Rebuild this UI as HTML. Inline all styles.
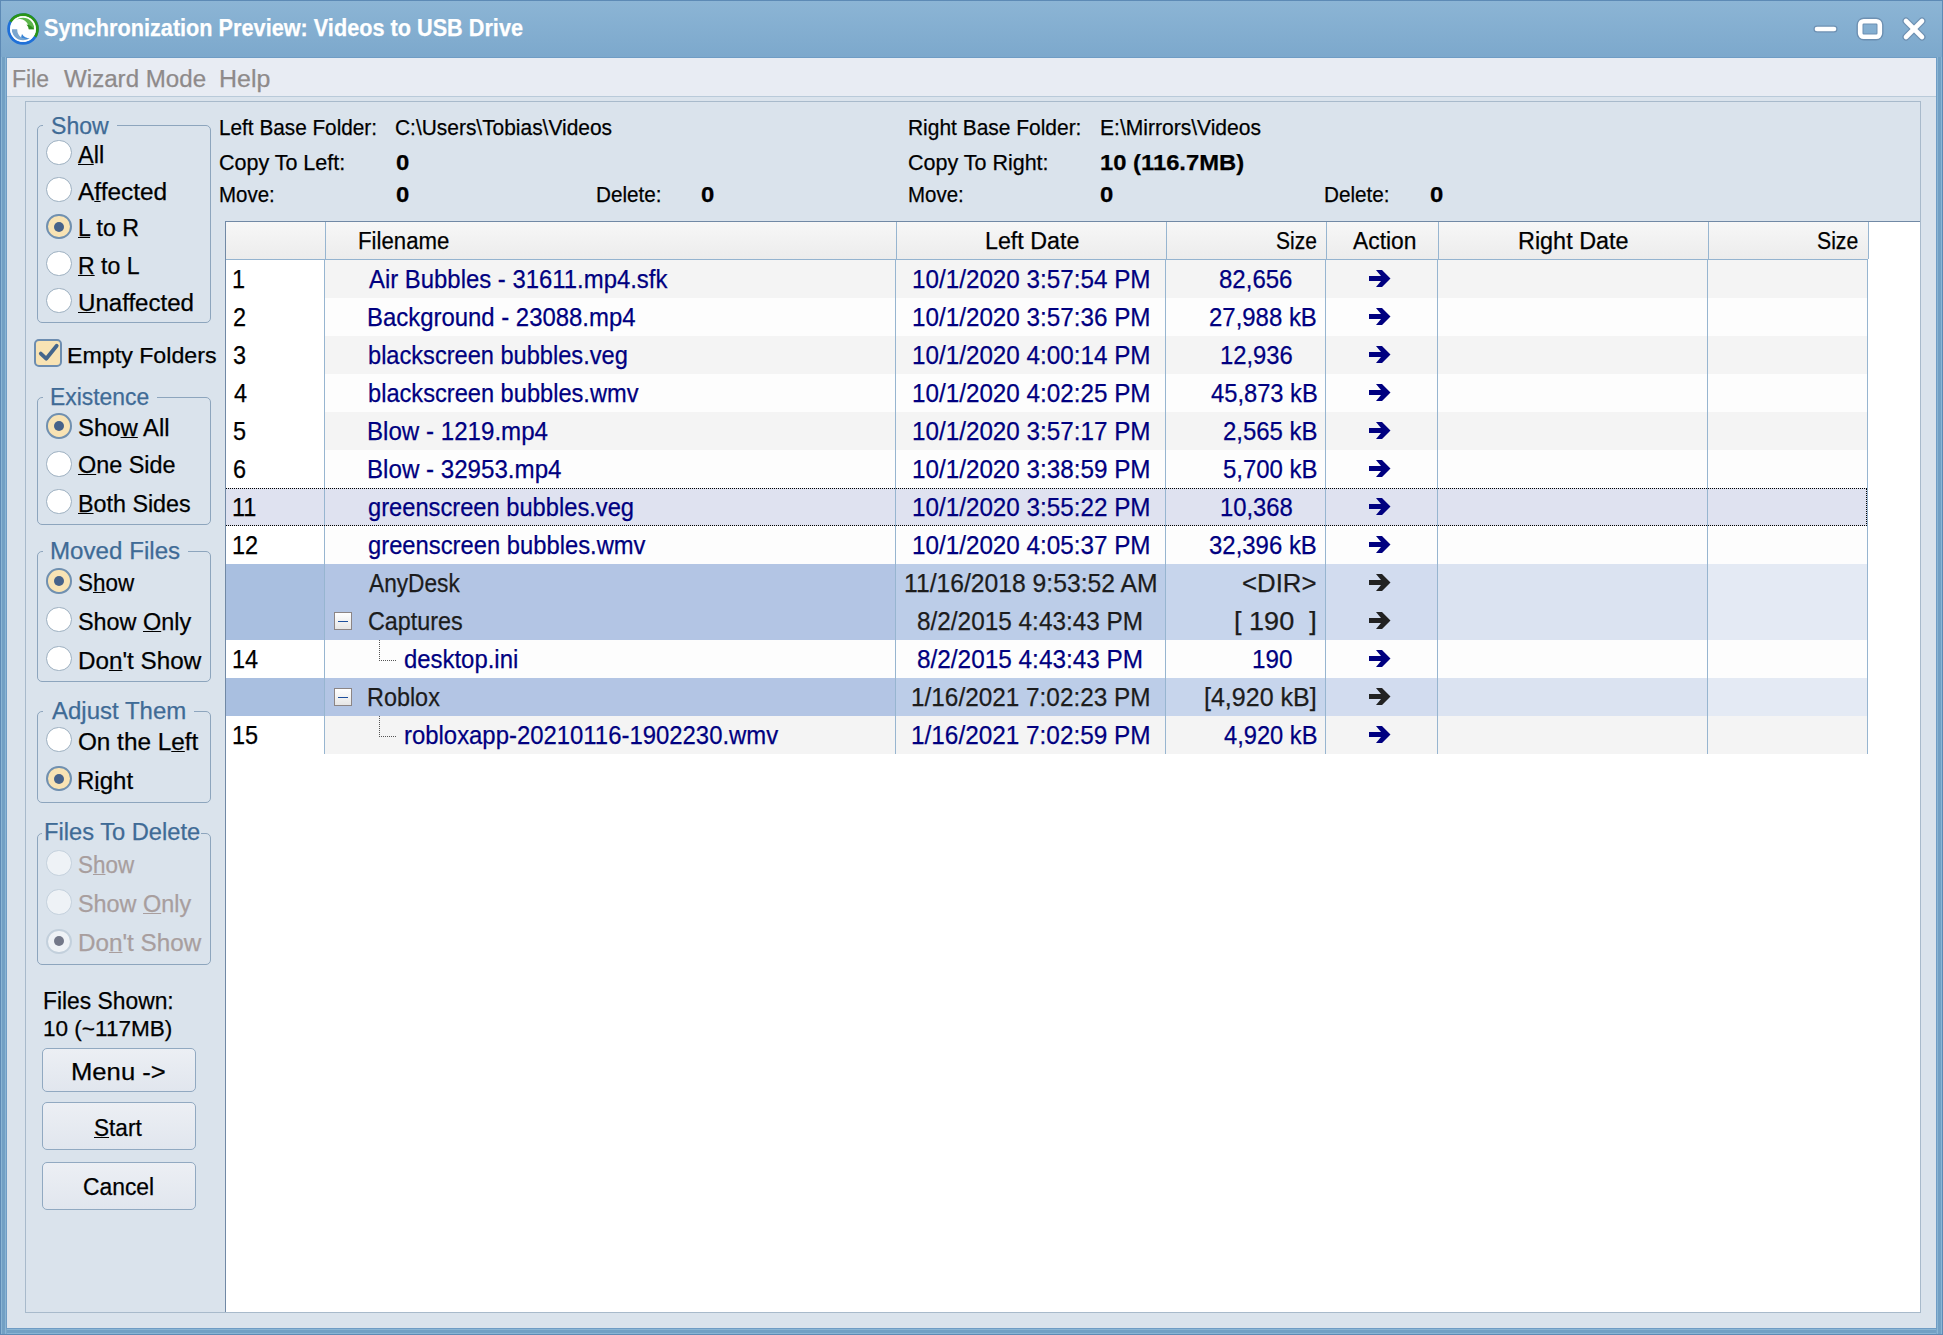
<!DOCTYPE html>
<html><head><meta charset="utf-8"><style>
html,body{margin:0;padding:0;width:1943px;height:1335px;overflow:hidden;background:#79a5ca;}
.t{position:absolute;white-space:pre;font-family:"Liberation Sans",sans-serif;transform-origin:0 0;-webkit-text-stroke:0.25px currentColor;}
.t u{text-decoration-thickness:1px;text-underline-offset:1px;}
</style></head><body>
<div style="position:absolute;left:0px;top:0px;width:1943px;height:1335px;background:#79a5ca;"></div>
<div style="position:absolute;left:0px;top:0px;width:1943px;height:58px;background:linear-gradient(#8cb5d5,#7ca8cc);"></div>
<div style="position:absolute;left:0px;top:0px;width:1943px;height:1px;background:#5d8ab5;"></div>
<div style="position:absolute;left:0px;top:0px;width:1px;height:1335px;background:#5d8ab5;"></div>
<div style="position:absolute;left:1942px;top:0px;width:1px;height:1335px;background:#5d8ab5;"></div>
<div style="position:absolute;left:0px;top:1334px;width:1943px;height:1px;background:#5d8ab5;"></div>
<div style="position:absolute;left:7px;top:1329px;width:1929px;height:1px;background:#8ab5d4;"></div>
<div style="position:absolute;left:7px;top:1333px;width:1929px;height:1px;background:#8ab5d4;"></div>
<div style="position:absolute;left:7px;top:1330px;width:1929px;height:3px;background:#72a0c4;"></div>
<div style="position:absolute;left:1px;top:57px;width:1px;height:1277px;background:#8ab5d4;"></div>
<div style="position:absolute;left:5px;top:57px;width:1px;height:1277px;background:#8ab5d4;"></div>
<div style="position:absolute;left:2px;top:57px;width:3px;height:1277px;background:#72a0c4;"></div>
<div style="position:absolute;left:1937px;top:57px;width:1px;height:1277px;background:#8ab5d4;"></div>
<div style="position:absolute;left:1941px;top:57px;width:1px;height:1277px;background:#8ab5d4;"></div>
<div style="position:absolute;left:1938px;top:57px;width:3px;height:1277px;background:#72a0c4;"></div>
<div style="position:absolute;left:6px;top:57px;width:1931px;height:1272px;background:#dae3ec;"></div>
<div style="position:absolute;left:6px;top:57px;width:1931px;height:1px;background:#6f9cc4;"></div>
<div style="position:absolute;left:6px;top:57px;width:1px;height:1272px;background:#6f9cc4;"></div>
<div style="position:absolute;left:6px;top:1328px;width:1931px;height:1px;background:#6f9cc4;"></div>
<div style="position:absolute;left:1936px;top:57px;width:1px;height:1272px;background:#6f9cc4;"></div>
<div style="position:absolute;left:7px;top:58px;width:1929px;height:38px;background:#e8ecf3;"></div>
<div style="position:absolute;left:7px;top:96px;width:1929px;height:1px;background:#b9cad9;"></div>
<div style="position:absolute;left:25px;top:101px;width:1896px;height:1212px;box-sizing:border-box;border:1px solid #a8bacb;"></div>
<div style="position:absolute;left:225px;top:221px;width:1695px;height:1091px;box-sizing:border-box;background:#fff;border-left:1px solid #7189a5;border-top:1px solid #7189a5;"></div>
<div style="position:absolute;left:37px;top:125px;width:174px;height:198px;box-sizing:border-box;border:1px solid #8da5bd;border-radius:5px;"></div>
<div style="position:absolute;left:43px;top:124px;width:74px;height:3px;background:#dae3ec;"></div>
<div style="position:absolute;left:37px;top:397px;width:174px;height:128px;box-sizing:border-box;border:1px solid #8da5bd;border-radius:5px;"></div>
<div style="position:absolute;left:43px;top:396px;width:114px;height:3px;background:#dae3ec;"></div>
<div style="position:absolute;left:37px;top:551px;width:174px;height:131px;box-sizing:border-box;border:1px solid #8da5bd;border-radius:5px;"></div>
<div style="position:absolute;left:43px;top:550px;width:145.2px;height:3px;background:#dae3ec;"></div>
<div style="position:absolute;left:37px;top:711px;width:174px;height:92px;box-sizing:border-box;border:1px solid #8da5bd;border-radius:5px;"></div>
<div style="position:absolute;left:43px;top:710px;width:151.3px;height:3px;background:#dae3ec;"></div>
<div style="position:absolute;left:37px;top:833px;width:174px;height:132px;box-sizing:border-box;border:1px solid #8da5bd;border-radius:5px;"></div>
<div style="position:absolute;left:42.2px;top:832px;width:158.5px;height:3px;background:#dae3ec;"></div>
<div style="position:absolute;left:46.3px;top:140.0px;width:25.4px;height:25.4px;box-sizing:border-box;border-radius:50%;background:#ffffff;border:1.9px solid #9cafc0;"></div>
<div style="position:absolute;left:46.3px;top:177.10000000000002px;width:25.4px;height:25.4px;box-sizing:border-box;border-radius:50%;background:#ffffff;border:1.9px solid #9cafc0;"></div>
<div style="position:absolute;left:46.3px;top:214.0px;width:25.4px;height:25.4px;box-sizing:border-box;border-radius:50%;background:#f8e3b4;border:2.2px solid #7090b0;"></div>
<div style="position:absolute;left:54.0px;top:221.7px;width:10.0px;height:10.0px;border-radius:50%;background:#46628a;"></div>
<div style="position:absolute;left:46.3px;top:250.90000000000003px;width:25.4px;height:25.4px;box-sizing:border-box;border-radius:50%;background:#ffffff;border:1.9px solid #9cafc0;"></div>
<div style="position:absolute;left:46.3px;top:288.1px;width:25.4px;height:25.4px;box-sizing:border-box;border-radius:50%;background:#ffffff;border:1.9px solid #9cafc0;"></div>
<div style="position:absolute;left:46.3px;top:413.2px;width:25.4px;height:25.4px;box-sizing:border-box;border-radius:50%;background:#f8e3b4;border:2.2px solid #7090b0;"></div>
<div style="position:absolute;left:54.0px;top:420.9px;width:10.0px;height:10.0px;border-radius:50%;background:#46628a;"></div>
<div style="position:absolute;left:46.3px;top:451.2px;width:25.4px;height:25.4px;box-sizing:border-box;border-radius:50%;background:#ffffff;border:1.9px solid #9cafc0;"></div>
<div style="position:absolute;left:46.3px;top:489.0px;width:25.4px;height:25.4px;box-sizing:border-box;border-radius:50%;background:#ffffff;border:1.9px solid #9cafc0;"></div>
<div style="position:absolute;left:46.3px;top:568.1999999999999px;width:25.4px;height:25.4px;box-sizing:border-box;border-radius:50%;background:#f8e3b4;border:2.2px solid #7090b0;"></div>
<div style="position:absolute;left:54.0px;top:575.9px;width:10.0px;height:10.0px;border-radius:50%;background:#46628a;"></div>
<div style="position:absolute;left:46.3px;top:607.0999999999999px;width:25.4px;height:25.4px;box-sizing:border-box;border-radius:50%;background:#ffffff;border:1.9px solid #9cafc0;"></div>
<div style="position:absolute;left:46.3px;top:646.0px;width:25.4px;height:25.4px;box-sizing:border-box;border-radius:50%;background:#ffffff;border:1.9px solid #9cafc0;"></div>
<div style="position:absolute;left:46.3px;top:727.0px;width:25.4px;height:25.4px;box-sizing:border-box;border-radius:50%;background:#ffffff;border:1.9px solid #9cafc0;"></div>
<div style="position:absolute;left:46.3px;top:765.9px;width:25.4px;height:25.4px;box-sizing:border-box;border-radius:50%;background:#f8e3b4;border:2.2px solid #7090b0;"></div>
<div style="position:absolute;left:54.0px;top:773.6px;width:10.0px;height:10.0px;border-radius:50%;background:#46628a;"></div>
<div style="position:absolute;left:46.3px;top:850.1999999999999px;width:25.4px;height:25.4px;box-sizing:border-box;border-radius:50%;background:#eef2f6;border:1.9px solid #c3d0dc;"></div>
<div style="position:absolute;left:46.3px;top:889.3px;width:25.4px;height:25.4px;box-sizing:border-box;border-radius:50%;background:#eef2f6;border:1.9px solid #c3d0dc;"></div>
<div style="position:absolute;left:46.3px;top:928.5px;width:25.4px;height:25.4px;box-sizing:border-box;border-radius:50%;background:#eef2f6;border:2.2px solid #c3d0dc;"></div>
<div style="position:absolute;left:54.0px;top:936.2px;width:10.0px;height:10.0px;border-radius:50%;background:#737889;"></div>
<div style="position:absolute;left:34px;top:339px;width:28px;height:28px;box-sizing:border-box;border-radius:5px;background:#f8e3b4;border:2px solid #6d8db0;"></div>
<svg style="position:absolute;left:34px;top:339px" width="28" height="28"><path d="M6.8 14.6 L12.2 19.7 L22.7 6.8" fill="none" stroke="#44668c" stroke-width="3.8" stroke-linecap="round" stroke-linejoin="round"/></svg>
<div style="position:absolute;left:42.3px;top:1048.1px;width:153.4px;height:43.5px;box-sizing:border-box;border-radius:5px;border:1px solid #91a9c1;background:linear-gradient(#eceff4,#e1e6ee);"></div>
<div style="position:absolute;left:42.3px;top:1102.4px;width:153.4px;height:47.59999999999991px;box-sizing:border-box;border-radius:5px;border:1px solid #91a9c1;background:linear-gradient(#eceff4,#e1e6ee);"></div>
<div style="position:absolute;left:42.3px;top:1162.4px;width:153.4px;height:47.399999999999864px;box-sizing:border-box;border-radius:5px;border:1px solid #91a9c1;background:linear-gradient(#eceff4,#e1e6ee);"></div>
<div style="position:absolute;left:226px;top:222px;width:1642px;height:37px;background:linear-gradient(#f7f7f7,#ececec);"></div>
<div style="position:absolute;left:226px;top:259px;width:1642px;height:1px;background:#94b3cf;"></div>
<div style="position:absolute;left:325px;top:222px;width:1px;height:37px;background:#97b5d0;"></div>
<div style="position:absolute;left:896px;top:222px;width:1px;height:37px;background:#97b5d0;"></div>
<div style="position:absolute;left:1166px;top:222px;width:1px;height:37px;background:#97b5d0;"></div>
<div style="position:absolute;left:1326px;top:222px;width:1px;height:37px;background:#97b5d0;"></div>
<div style="position:absolute;left:1438px;top:222px;width:1px;height:37px;background:#97b5d0;"></div>
<div style="position:absolute;left:1708px;top:222px;width:1px;height:37px;background:#97b5d0;"></div>
<div style="position:absolute;left:1868px;top:222px;width:1px;height:37px;background:#97b5d0;"></div>
<div style="position:absolute;left:226px;top:260px;width:98px;height:38px;background:#ffffff;"></div>
<div style="position:absolute;left:325px;top:260px;width:1542px;height:38px;background:#f4f4f4;"></div>
<div style="position:absolute;left:226px;top:298px;width:98px;height:38px;background:#ffffff;"></div>
<div style="position:absolute;left:325px;top:298px;width:1542px;height:38px;background:#fdfdfd;"></div>
<div style="position:absolute;left:226px;top:336px;width:98px;height:38px;background:#ffffff;"></div>
<div style="position:absolute;left:325px;top:336px;width:1542px;height:38px;background:#f4f4f4;"></div>
<div style="position:absolute;left:226px;top:374px;width:98px;height:38px;background:#ffffff;"></div>
<div style="position:absolute;left:325px;top:374px;width:1542px;height:38px;background:#fdfdfd;"></div>
<div style="position:absolute;left:226px;top:412px;width:98px;height:38px;background:#ffffff;"></div>
<div style="position:absolute;left:325px;top:412px;width:1542px;height:38px;background:#f4f4f4;"></div>
<div style="position:absolute;left:226px;top:450px;width:98px;height:38px;background:#ffffff;"></div>
<div style="position:absolute;left:325px;top:450px;width:1542px;height:38px;background:#fdfdfd;"></div>
<div style="position:absolute;left:226px;top:488px;width:98px;height:38px;background:#dfe2f0;"></div>
<div style="position:absolute;left:325px;top:488px;width:1542px;height:38px;background:#dfe2f0;"></div>
<div style="position:absolute;left:226px;top:526px;width:98px;height:38px;background:#ffffff;"></div>
<div style="position:absolute;left:325px;top:526px;width:1542px;height:38px;background:#fdfdfd;"></div>
<div style="position:absolute;left:226px;top:564px;width:99px;height:38px;background:#a9bfe0;"></div>
<div style="position:absolute;left:325px;top:564px;width:571px;height:38px;background:#b3c5e4;"></div>
<div style="position:absolute;left:896px;top:564px;width:270px;height:38px;background:#bccde8;"></div>
<div style="position:absolute;left:1166px;top:564px;width:160px;height:38px;background:#c7d5ec;"></div>
<div style="position:absolute;left:1326px;top:564px;width:112px;height:38px;background:#d2dcef;"></div>
<div style="position:absolute;left:1438px;top:564px;width:270px;height:38px;background:#dbe3f1;"></div>
<div style="position:absolute;left:1708px;top:564px;width:159px;height:38px;background:#e4eaf4;"></div>
<div style="position:absolute;left:226px;top:602px;width:99px;height:38px;background:#a9bfe0;"></div>
<div style="position:absolute;left:325px;top:602px;width:571px;height:38px;background:#b3c5e4;"></div>
<div style="position:absolute;left:896px;top:602px;width:270px;height:38px;background:#bccde8;"></div>
<div style="position:absolute;left:1166px;top:602px;width:160px;height:38px;background:#c7d5ec;"></div>
<div style="position:absolute;left:1326px;top:602px;width:112px;height:38px;background:#d2dcef;"></div>
<div style="position:absolute;left:1438px;top:602px;width:270px;height:38px;background:#dbe3f1;"></div>
<div style="position:absolute;left:1708px;top:602px;width:159px;height:38px;background:#e4eaf4;"></div>
<div style="position:absolute;left:226px;top:640px;width:98px;height:38px;background:#ffffff;"></div>
<div style="position:absolute;left:325px;top:640px;width:1542px;height:38px;background:#fdfdfd;"></div>
<div style="position:absolute;left:226px;top:678px;width:99px;height:38px;background:#a9bfe0;"></div>
<div style="position:absolute;left:325px;top:678px;width:571px;height:38px;background:#b3c5e4;"></div>
<div style="position:absolute;left:896px;top:678px;width:270px;height:38px;background:#bccde8;"></div>
<div style="position:absolute;left:1166px;top:678px;width:160px;height:38px;background:#c7d5ec;"></div>
<div style="position:absolute;left:1326px;top:678px;width:112px;height:38px;background:#d2dcef;"></div>
<div style="position:absolute;left:1438px;top:678px;width:270px;height:38px;background:#dbe3f1;"></div>
<div style="position:absolute;left:1708px;top:678px;width:159px;height:38px;background:#e4eaf4;"></div>
<div style="position:absolute;left:226px;top:716px;width:98px;height:38px;background:#ffffff;"></div>
<div style="position:absolute;left:325px;top:716px;width:1542px;height:38px;background:#f4f4f4;"></div>
<div style="position:absolute;left:324px;top:260px;width:1px;height:494px;background:#97b5d0;"></div>
<div style="position:absolute;left:895px;top:260px;width:1px;height:494px;background:#97b5d0;"></div>
<div style="position:absolute;left:1165px;top:260px;width:1px;height:494px;background:#97b5d0;"></div>
<div style="position:absolute;left:1325px;top:260px;width:1px;height:494px;background:#97b5d0;"></div>
<div style="position:absolute;left:1437px;top:260px;width:1px;height:494px;background:#97b5d0;"></div>
<div style="position:absolute;left:1707px;top:260px;width:1px;height:494px;background:#97b5d0;"></div>
<div style="position:absolute;left:1867px;top:260px;width:1px;height:494px;background:#97b5d0;"></div>
<div style="position:absolute;left:226px;top:488px;width:1641px;height:38px;box-sizing:border-box;border:1px dotted #000;border-left:none;"></div>
<div style="position:absolute;left:334px;top:612px;width:18px;height:18px;box-sizing:border-box;border:1px solid #8c8585;background:linear-gradient(#fff,#e6e6e6);"></div>
<div style="position:absolute;left:338px;top:620.5px;width:10px;height:1.6px;background:#1d4f9c;"></div>
<div style="position:absolute;left:334px;top:688px;width:18px;height:18px;box-sizing:border-box;border:1px solid #8c8585;background:linear-gradient(#fff,#e6e6e6);"></div>
<div style="position:absolute;left:338px;top:696.5px;width:10px;height:1.6px;background:#1d4f9c;"></div>
<div style="position:absolute;left:379px;top:640px;width:1px;height:21px;border-left:1px dotted #555;"></div>
<div style="position:absolute;left:379px;top:660px;width:17px;height:1px;border-top:1px dotted #555;"></div>
<div style="position:absolute;left:379px;top:716px;width:1px;height:21px;border-left:1px dotted #555;"></div>
<div style="position:absolute;left:379px;top:736px;width:17px;height:1px;border-top:1px dotted #555;"></div>
<svg style="position:absolute;left:1369px;top:270px" width="23" height="18"><polygon points="0,6 12,6 7,0 13,0 21.5,8.5 13,17 7,17 12,11 0,11" fill="#000080"/></svg>
<svg style="position:absolute;left:1369px;top:308px" width="23" height="18"><polygon points="0,6 12,6 7,0 13,0 21.5,8.5 13,17 7,17 12,11 0,11" fill="#000080"/></svg>
<svg style="position:absolute;left:1369px;top:346px" width="23" height="18"><polygon points="0,6 12,6 7,0 13,0 21.5,8.5 13,17 7,17 12,11 0,11" fill="#000080"/></svg>
<svg style="position:absolute;left:1369px;top:384px" width="23" height="18"><polygon points="0,6 12,6 7,0 13,0 21.5,8.5 13,17 7,17 12,11 0,11" fill="#000080"/></svg>
<svg style="position:absolute;left:1369px;top:422px" width="23" height="18"><polygon points="0,6 12,6 7,0 13,0 21.5,8.5 13,17 7,17 12,11 0,11" fill="#000080"/></svg>
<svg style="position:absolute;left:1369px;top:460px" width="23" height="18"><polygon points="0,6 12,6 7,0 13,0 21.5,8.5 13,17 7,17 12,11 0,11" fill="#000080"/></svg>
<svg style="position:absolute;left:1369px;top:498px" width="23" height="18"><polygon points="0,6 12,6 7,0 13,0 21.5,8.5 13,17 7,17 12,11 0,11" fill="#000080"/></svg>
<svg style="position:absolute;left:1369px;top:536px" width="23" height="18"><polygon points="0,6 12,6 7,0 13,0 21.5,8.5 13,17 7,17 12,11 0,11" fill="#000080"/></svg>
<svg style="position:absolute;left:1369px;top:574px" width="23" height="18"><polygon points="0,6 12,6 7,0 13,0 21.5,8.5 13,17 7,17 12,11 0,11" fill="#222"/></svg>
<svg style="position:absolute;left:1369px;top:612px" width="23" height="18"><polygon points="0,6 12,6 7,0 13,0 21.5,8.5 13,17 7,17 12,11 0,11" fill="#222"/></svg>
<svg style="position:absolute;left:1369px;top:650px" width="23" height="18"><polygon points="0,6 12,6 7,0 13,0 21.5,8.5 13,17 7,17 12,11 0,11" fill="#000080"/></svg>
<svg style="position:absolute;left:1369px;top:688px" width="23" height="18"><polygon points="0,6 12,6 7,0 13,0 21.5,8.5 13,17 7,17 12,11 0,11" fill="#222"/></svg>
<svg style="position:absolute;left:1369px;top:726px" width="23" height="18"><polygon points="0,6 12,6 7,0 13,0 21.5,8.5 13,17 7,17 12,11 0,11" fill="#000080"/></svg>
<svg style="position:absolute;left:1805px;top:10px" width="130" height="40">
<g stroke="#5a7799" stroke-width="7" stroke-linecap="round" fill="none" opacity="0.55">
<line x1="12" y1="19" x2="29" y2="19"/>
<rect x="55" y="11" width="20" height="16" rx="4"/>
<line x1="101" y1="11" x2="117" y2="27"/><line x1="117" y1="11" x2="101" y2="27"/>
</g>
<g stroke="#fff" stroke-width="4.6" stroke-linecap="round" fill="none">
<line x1="12" y1="19" x2="29" y2="19"/>
<rect x="55.2" y="11.2" width="19.6" height="15.6" rx="3.5"/>
<line x1="101" y1="11" x2="117" y2="27"/><line x1="117" y1="11" x2="101" y2="27"/>
</g></svg>
<svg style="position:absolute;left:7.07px;top:12.8px" width="32" height="32" viewBox="-16 -16 32 32">
<circle cx="0" cy="0" r="15.8" fill="#1f70d8"/>
<path d="M0 0 L-13.64 -7.97 A15.8 15.8 0 1 1 13.37 8.42 Z" fill="#2a9418"/>
<circle cx="0" cy="0" r="13" fill="#fff"/>
<path d="M-7.5 -9.3 A11.3 11.3 0 0 1 11.2 0.3 L5.8 0.3 A9.5 9.5 0 0 0 -7.5 -9.3Z" fill="#5db64b"/>
<path d="M3.5 -4.5 A11.3 11.3 0 0 1 11.2 0.3 L5.8 0.3 A9.5 9.5 0 0 0 3.5 -4.5Z" fill="#2f8f1f"/>
<path d="M7.5 9.3 A11.3 11.3 0 0 1 -11.2 0.3 L-5.8 0.3 A9.5 9.5 0 0 0 7.5 9.3Z" fill="#7ba6cf"/>
<path d="M-2 8.5 A11.3 11.3 0 0 0 7.5 9.3 A9.5 9.5 0 0 1 -1 5Z" fill="#3b86d6"/>
<circle cx="0" cy="0" r="12" fill="none" stroke="#fff" stroke-width="1.4"/>
</svg>
<div class="t" style="left:44.00px;top:16.57px;font-size:23.19px;line-height:23.19px;color:#fff;font-weight:bold;transform:scaleX(0.9348);">Synchronization Preview: Videos to USB Drive</div>
<div class="t" style="left:11.70px;top:67.14px;font-size:24.64px;line-height:24.64px;color:#8e8a8a;transform:scaleX(0.9302);">File</div>
<div class="t" style="left:63.80px;top:67.14px;font-size:24.64px;line-height:24.64px;color:#8e8a8a;transform:scaleX(0.9796);">Wizard Mode</div>
<div class="t" style="left:218.88px;top:67.14px;font-size:24.64px;line-height:24.64px;color:#8e8a8a;transform:scaleX(1.0137);">Help</div>
<div class="t" style="left:219.48px;top:115.82px;font-size:22.9px;line-height:22.9px;color:#000;transform:scaleX(0.9066);">Left Base Folder:</div>
<div class="t" style="left:395.00px;top:115.82px;font-size:22.9px;line-height:22.9px;color:#000;transform:scaleX(0.9137);">C:\Users\Tobias\Videos</div>
<div class="t" style="left:219.47px;top:151.42px;font-size:22.9px;line-height:22.9px;color:#000;transform:scaleX(0.9382);">Copy To Left:</div>
<div class="t" style="left:395.91px;top:151.66px;font-size:22.61px;line-height:22.61px;color:#000;font-weight:bold;transform:scaleX(1.0568);">0</div>
<div class="t" style="left:219.43px;top:183.32px;font-size:22.9px;line-height:22.9px;color:#000;transform:scaleX(0.8935);">Move:</div>
<div class="t" style="left:395.91px;top:183.56px;font-size:22.61px;line-height:22.61px;color:#000;font-weight:bold;transform:scaleX(1.0568);">0</div>
<div class="t" style="left:596.45px;top:183.32px;font-size:22.9px;line-height:22.9px;color:#000;transform:scaleX(0.9042);">Delete:</div>
<div class="t" style="left:701.30px;top:183.56px;font-size:22.61px;line-height:22.61px;color:#000;font-weight:bold;transform:scaleX(1.0568);">0</div>
<div class="t" style="left:908.08px;top:115.82px;font-size:22.9px;line-height:22.9px;color:#000;transform:scaleX(0.9149);">Right Base Folder:</div>
<div class="t" style="left:1099.99px;top:115.82px;font-size:22.9px;line-height:22.9px;color:#000;transform:scaleX(0.9194);">E:\Mirrors\Videos</div>
<div class="t" style="left:908.07px;top:151.42px;font-size:22.9px;line-height:22.9px;color:#000;transform:scaleX(0.9388);">Copy To Right:</div>
<div class="t" style="left:1099.99px;top:151.66px;font-size:22.61px;line-height:22.61px;color:#000;font-weight:bold;transform:scaleX(1.0521);">10 (116.7MB)</div>
<div class="t" style="left:908.04px;top:183.32px;font-size:22.9px;line-height:22.9px;color:#000;transform:scaleX(0.8935);">Move:</div>
<div class="t" style="left:1099.89px;top:183.56px;font-size:22.61px;line-height:22.61px;color:#000;font-weight:bold;transform:scaleX(1.0568);">0</div>
<div class="t" style="left:1323.97px;top:183.32px;font-size:22.9px;line-height:22.9px;color:#000;transform:scaleX(0.9042);">Delete:</div>
<div class="t" style="left:1429.89px;top:183.56px;font-size:22.61px;line-height:22.61px;color:#000;font-weight:bold;transform:scaleX(1.0568);">0</div>
<div class="t" style="left:50.99px;top:113.56px;font-size:23.91px;line-height:23.91px;color:#3f6b96;transform:scaleX(0.9649);">Show</div>
<div class="t" style="left:50.24px;top:385.71px;font-size:23.62px;line-height:23.62px;color:#3f6b96;transform:scaleX(0.9698);">Existence</div>
<div class="t" style="left:49.96px;top:539.43px;font-size:24.06px;line-height:24.06px;color:#3f6b96;transform:scaleX(1.0039);">Moved Files</div>
<div class="t" style="left:52.10px;top:699.61px;font-size:23.62px;line-height:23.62px;color:#3f6b96;transform:scaleX(1.0167);">Adjust Them</div>
<div class="t" style="left:43.96px;top:821.31px;font-size:23.62px;line-height:23.62px;color:#3f6b96;transform:scaleX(1.0033);">Files To Delete</div>
<div class="t" style="left:77.90px;top:142.99px;font-size:24.35px;line-height:24.35px;color:#000;transform:scaleX(0.9667);"><u>A</u>ll</div>
<div class="t" style="left:77.91px;top:179.69px;font-size:24.35px;line-height:24.35px;color:#000;transform:scaleX(1.0027);">A<u>f</u>fected</div>
<div class="t" style="left:77.91px;top:216.39px;font-size:24.35px;line-height:24.35px;color:#000;transform:scaleX(0.9534);"><u>L</u> to R</div>
<div class="t" style="left:77.91px;top:253.89px;font-size:24.35px;line-height:24.35px;color:#000;transform:scaleX(0.9473);"><u>R</u> to L</div>
<div class="t" style="left:77.95px;top:290.89px;font-size:24.35px;line-height:24.35px;color:#000;transform:scaleX(0.9888);"><u>U</u>naffected</div>
<div class="t" style="left:67.48px;top:343.52px;font-size:22.9px;line-height:22.9px;color:#000;transform:scaleX(1.0134);">Empty Folders</div>
<div class="t" style="left:77.97px;top:416.19px;font-size:24.35px;line-height:24.35px;color:#000;transform:scaleX(0.9816);">Sho<u>w</u> All</div>
<div class="t" style="left:78.47px;top:453.39px;font-size:24.35px;line-height:24.35px;color:#000;transform:scaleX(0.9609);"><u>O</u>ne Side</div>
<div class="t" style="left:77.96px;top:491.69px;font-size:24.35px;line-height:24.35px;color:#000;transform:scaleX(0.9567);"><u>B</u>oth Sides</div>
<div class="t" style="left:77.90px;top:570.79px;font-size:24.35px;line-height:24.35px;color:#000;transform:scaleX(0.9212);">S<u>h</u>ow</div>
<div class="t" style="left:77.90px;top:609.69px;font-size:24.35px;line-height:24.35px;color:#000;transform:scaleX(0.9608);">Show <u>O</u>nly</div>
<div class="t" style="left:77.77px;top:648.89px;font-size:24.35px;line-height:24.35px;color:#000;transform:scaleX(0.9950);">Do<u>n</u>&#x27;t Show</div>
<div class="t" style="left:77.89px;top:729.79px;font-size:24.35px;line-height:24.35px;color:#000;">On the L<u>e</u>ft</div>
<div class="t" style="left:77.32px;top:768.89px;font-size:24.35px;line-height:24.35px;color:#000;transform:scaleX(0.9865);">R<u>i</u>ght</div>
<div class="t" style="left:77.90px;top:852.59px;font-size:24.35px;line-height:24.35px;color:#a89e9e;transform:scaleX(0.9212);">S<u>h</u>ow</div>
<div class="t" style="left:77.90px;top:891.99px;font-size:24.35px;line-height:24.35px;color:#a89e9e;transform:scaleX(0.9608);">Show <u>O</u>nly</div>
<div class="t" style="left:77.77px;top:930.89px;font-size:24.35px;line-height:24.35px;color:#a89e9e;transform:scaleX(0.9950);">Do<u>n</u>&#x27;t Show</div>
<div class="t" style="left:42.95px;top:989.44px;font-size:24.64px;line-height:24.64px;color:#000;transform:scaleX(0.9271);">Files Shown:</div>
<div class="t" style="left:43.35px;top:1017.02px;font-size:22.9px;line-height:22.9px;color:#000;transform:scaleX(0.9849);">10 (~117MB)</div>
<div class="t" style="left:70.72px;top:1059.99px;font-size:24.35px;line-height:24.35px;color:#000;transform:scaleX(1.0534);">Menu -&gt;</div>
<div class="t" style="left:94.38px;top:1115.61px;font-size:24.2px;line-height:24.2px;color:#000;transform:scaleX(0.9339);"><u>S</u>tart</div>
<div class="t" style="left:83.06px;top:1175.09px;font-size:24.35px;line-height:24.35px;color:#000;transform:scaleX(0.9391);">Cancel</div>
<div class="t" style="left:358.18px;top:229.14px;font-size:24.64px;line-height:24.64px;color:#000;transform:scaleX(0.9018);">Filename</div>
<div class="t" style="left:984.94px;top:229.14px;font-size:24.64px;line-height:24.64px;color:#000;transform:scaleX(0.9439);">Left Date</div>
<div class="t" style="left:1275.96px;top:229.14px;font-size:24.64px;line-height:24.64px;color:#000;transform:scaleX(0.8517);">Size</div>
<div class="t" style="left:1352.61px;top:229.14px;font-size:24.64px;line-height:24.64px;color:#000;transform:scaleX(0.9266);">Action</div>
<div class="t" style="left:1517.94px;top:229.14px;font-size:24.64px;line-height:24.64px;color:#000;transform:scaleX(0.9504);">Right Date</div>
<div class="t" style="left:1816.65px;top:229.14px;font-size:24.64px;line-height:24.64px;color:#000;transform:scaleX(0.8615);">Size</div>
<div class="t" style="left:232.00px;top:265.91px;font-size:26.09px;line-height:26.09px;color:#000;transform:scaleX(0.9000);">1</div>
<div class="t" style="left:369.00px;top:265.91px;font-size:26.09px;line-height:26.09px;color:#000080;transform:scaleX(0.9163);">Air Bubbles - 31611.mp4.sfk</div>
<div class="t" style="left:912.07px;top:265.91px;font-size:26.09px;line-height:26.09px;color:#000080;transform:scaleX(0.9293);">10/1/2020 3:57:54 PM</div>
<div class="t" style="left:1219.28px;top:265.91px;font-size:26.09px;line-height:26.09px;color:#000080;transform:scaleX(0.9207);">82,656</div>
<div class="t" style="left:233.00px;top:303.91px;font-size:26.09px;line-height:26.09px;color:#000;transform:scaleX(0.9000);">2</div>
<div class="t" style="left:366.98px;top:303.91px;font-size:26.09px;line-height:26.09px;color:#000080;transform:scaleX(0.9169);">Background - 23088.mp4</div>
<div class="t" style="left:912.07px;top:303.91px;font-size:26.09px;line-height:26.09px;color:#000080;transform:scaleX(0.9293);">10/1/2020 3:57:36 PM</div>
<div class="t" style="left:1209.47px;top:303.91px;font-size:26.09px;line-height:26.09px;color:#000080;transform:scaleX(0.9181);">27,988 kB</div>
<div class="t" style="left:233.00px;top:341.91px;font-size:26.09px;line-height:26.09px;color:#000;transform:scaleX(0.9000);">3</div>
<div class="t" style="left:367.99px;top:341.91px;font-size:26.09px;line-height:26.09px;color:#000080;transform:scaleX(0.9050);">blackscreen bubbles.veg</div>
<div class="t" style="left:912.07px;top:341.91px;font-size:26.09px;line-height:26.09px;color:#000080;transform:scaleX(0.9293);">10/1/2020 4:00:14 PM</div>
<div class="t" style="left:1219.95px;top:341.91px;font-size:26.09px;line-height:26.09px;color:#000080;transform:scaleX(0.9126);">12,936</div>
<div class="t" style="left:234.00px;top:379.91px;font-size:26.09px;line-height:26.09px;color:#000;transform:scaleX(0.9000);">4</div>
<div class="t" style="left:368.00px;top:379.91px;font-size:26.09px;line-height:26.09px;color:#000080;transform:scaleX(0.9059);">blackscreen bubbles.wmv</div>
<div class="t" style="left:912.07px;top:379.91px;font-size:26.09px;line-height:26.09px;color:#000080;transform:scaleX(0.9293);">10/1/2020 4:02:25 PM</div>
<div class="t" style="left:1210.50px;top:379.91px;font-size:26.09px;line-height:26.09px;color:#000080;transform:scaleX(0.9094);">45,873 kB</div>
<div class="t" style="left:233.00px;top:417.91px;font-size:26.09px;line-height:26.09px;color:#000;transform:scaleX(0.9000);">5</div>
<div class="t" style="left:366.98px;top:417.91px;font-size:26.09px;line-height:26.09px;color:#000080;transform:scaleX(0.9250);">Blow - 1219.mp4</div>
<div class="t" style="left:912.07px;top:417.91px;font-size:26.09px;line-height:26.09px;color:#000080;transform:scaleX(0.9293);">10/1/2020 3:57:17 PM</div>
<div class="t" style="left:1222.77px;top:417.91px;font-size:26.09px;line-height:26.09px;color:#000080;transform:scaleX(0.9186);">2,565 kB</div>
<div class="t" style="left:233.00px;top:455.91px;font-size:26.09px;line-height:26.09px;color:#000;transform:scaleX(0.9000);">6</div>
<div class="t" style="left:366.98px;top:455.91px;font-size:26.09px;line-height:26.09px;color:#000080;transform:scaleX(0.9254);">Blow - 32953.mp4</div>
<div class="t" style="left:912.07px;top:455.91px;font-size:26.09px;line-height:26.09px;color:#000080;transform:scaleX(0.9293);">10/1/2020 3:38:59 PM</div>
<div class="t" style="left:1222.77px;top:455.91px;font-size:26.09px;line-height:26.09px;color:#000080;transform:scaleX(0.9186);">5,700 kB</div>
<div class="t" style="left:232.00px;top:493.91px;font-size:26.09px;line-height:26.09px;color:#000;transform:scaleX(0.9000);">11</div>
<div class="t" style="left:367.99px;top:493.91px;font-size:26.09px;line-height:26.09px;color:#000080;transform:scaleX(0.9083);">greenscreen bubbles.veg</div>
<div class="t" style="left:912.07px;top:493.91px;font-size:26.09px;line-height:26.09px;color:#000080;transform:scaleX(0.9293);">10/1/2020 3:55:22 PM</div>
<div class="t" style="left:1219.95px;top:493.91px;font-size:26.09px;line-height:26.09px;color:#000080;transform:scaleX(0.9126);">10,368</div>
<div class="t" style="left:232.00px;top:531.91px;font-size:26.09px;line-height:26.09px;color:#000;transform:scaleX(0.9000);">12</div>
<div class="t" style="left:368.00px;top:531.91px;font-size:26.09px;line-height:26.09px;color:#000080;transform:scaleX(0.9116);">greenscreen bubbles.wmv</div>
<div class="t" style="left:912.07px;top:531.91px;font-size:26.09px;line-height:26.09px;color:#000080;transform:scaleX(0.9293);">10/1/2020 4:05:37 PM</div>
<div class="t" style="left:1209.47px;top:531.91px;font-size:26.09px;line-height:26.09px;color:#000080;transform:scaleX(0.9181);">32,396 kB</div>
<div class="t" style="left:369.00px;top:569.91px;font-size:26.09px;line-height:26.09px;color:#1c1c1c;transform:scaleX(0.8696);">AnyDesk</div>
<div class="t" style="left:904.27px;top:569.91px;font-size:26.09px;line-height:26.09px;color:#1c1c1c;transform:scaleX(0.9469);">11/16/2018 9:53:52 AM</div>
<div class="t" style="left:1241.58px;top:569.91px;font-size:26.09px;line-height:26.09px;color:#1c1c1c;transform:scaleX(0.9890);">&lt;DIR&gt;</div>
<div class="t" style="left:367.98px;top:607.91px;font-size:26.09px;line-height:26.09px;color:#1c1c1c;transform:scaleX(0.8955);">Captures</div>
<div class="t" style="left:917.48px;top:607.91px;font-size:26.09px;line-height:26.09px;color:#1c1c1c;transform:scaleX(0.9339);">8/2/2015 4:43:43 PM</div>
<div class="t" style="left:1233.91px;top:607.91px;font-size:26.09px;line-height:26.09px;color:#1c1c1c;transform:scaleX(1.0375);">[ 190  ]</div>
<div class="t" style="left:232.00px;top:645.91px;font-size:26.09px;line-height:26.09px;color:#000;transform:scaleX(0.9000);">14</div>
<div class="t" style="left:404.28px;top:645.91px;font-size:26.09px;line-height:26.09px;color:#000080;transform:scaleX(0.9162);">desktop.ini</div>
<div class="t" style="left:917.48px;top:645.91px;font-size:26.09px;line-height:26.09px;color:#000080;transform:scaleX(0.9339);">8/2/2015 4:43:43 PM</div>
<div class="t" style="left:1252.36px;top:645.91px;font-size:26.09px;line-height:26.09px;color:#000080;transform:scaleX(0.9276);">190</div>
<div class="t" style="left:366.93px;top:683.91px;font-size:26.09px;line-height:26.09px;color:#1c1c1c;transform:scaleX(0.8971);">Roblox</div>
<div class="t" style="left:911.27px;top:683.91px;font-size:26.09px;line-height:26.09px;color:#1c1c1c;transform:scaleX(0.9335);">1/16/2021 7:02:23 PM</div>
<div class="t" style="left:1203.96px;top:683.91px;font-size:26.09px;line-height:26.09px;color:#1c1c1c;transform:scaleX(0.9595);">[4,920 kB]</div>
<div class="t" style="left:232.00px;top:721.91px;font-size:26.09px;line-height:26.09px;color:#000;transform:scaleX(0.9000);">15</div>
<div class="t" style="left:404.30px;top:721.91px;font-size:26.09px;line-height:26.09px;color:#000080;transform:scaleX(0.9163);">robloxapp-20210116-1902230.wmv</div>
<div class="t" style="left:911.27px;top:721.91px;font-size:26.09px;line-height:26.09px;color:#000080;transform:scaleX(0.9335);">1/16/2021 7:02:59 PM</div>
<div class="t" style="left:1223.79px;top:721.91px;font-size:26.09px;line-height:26.09px;color:#000080;transform:scaleX(0.9085);">4,920 kB</div>
</body></html>
